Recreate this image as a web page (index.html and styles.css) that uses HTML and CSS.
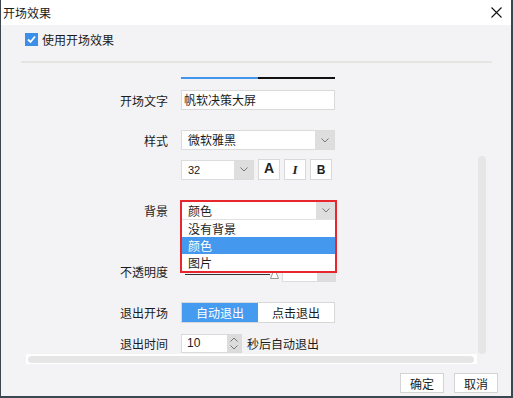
FILE: index.html
```html
<!DOCTYPE html>
<html lang="zh-CN">
<head>
    <meta charset="UTF-8">
    <title>开场效果</title>
    <link rel="stylesheet" href="styles.css">
</head>
<body>
    <div class="window">
        <div class="titlebar">
            <span class="title">开场效果</span>
            <svg class="close" width="11" height="11" viewBox="0 0 11 11"><path d="M0.5 0.5 L10.5 10.5 M10.5 0.5 L0.5 10.5" stroke="#111" stroke-width="1.1" fill="none"/></svg>
        </div>

        <!-- 启用开关 -->
        <div class="enable">
            <span class="checkbox">
                <svg width="11" height="11" viewBox="0 0 11 11"><path d="M2 5.5 L4.5 8 L9 2.5" stroke="#fff" stroke-width="1.8" fill="none"/></svg>
            </span>
            <span>使用开场效果</span>
        </div>
        <div class="divider"></div>

        <div class="pane">
            <div class="content">
                <div class="tabline"><span class="tab-on"></span><span class="tab-off"></span></div>

                <div class="row r1">
                    <label class="lbl">开场文字</label>
                    <div class="input">帆软决策大屏</div>
                </div>

                <div class="row r2">
                    <label class="lbl">样式</label>
                    <div class="select wide">
                        <span class="val">微软雅黑</span>
                        <span class="arrow"><svg width="8" height="5" viewBox="0 0 8 5"><path d="M0.5 0.5 L4 4 L7.5 0.5" stroke="#777" fill="none"/></svg></span>
                    </div>
                </div>

                <div class="row r3">
                    <label class="lbl"></label>
                    <div class="select small">
                        <span class="val num">32</span>
                        <span class="arrow"><svg width="8" height="5" viewBox="0 0 8 5"><path d="M0.5 0.5 L4 4 L7.5 0.5" stroke="#777" fill="none"/></svg></span>
                    </div>
                    <span class="fbtn fa">A</span>
                    <span class="fbtn fi">I</span>
                    <span class="fbtn fb">B</span>
                </div>

                <div class="row r4">
                    <label class="lbl">背景</label>
                    <div class="combo-holder">
                        <div class="combo">
                            <div class="combo-head">
                                <span class="val">颜色</span>
                                <span class="arrow"><svg width="8" height="5" viewBox="0 0 8 5"><path d="M0.5 0.5 L4 4 L7.5 0.5" stroke="#777" fill="none"/></svg></span>
                            </div>
                            <div class="opt">没有背景</div>
                            <div class="opt on">颜色</div>
                            <div class="opt">图片</div>
                        </div>
                    </div>
                </div>

                <div class="row r5">
                    <label class="lbl">不透明度</label>
                    <div class="slider">
                        <span class="track"></span>
                        <svg class="knob" width="9" height="11" viewBox="0 0 9 11"><path d="M4.5 0.5 L8.5 10.5 L0.5 10.5 Z" stroke="#999" fill="#fff"/></svg>
                    </div>
                    <div class="select pct">
                        <span class="val num">100%</span>
                        <span class="arrow"><svg width="8" height="5" viewBox="0 0 8 5"><path d="M0.5 0.5 L4 4 L7.5 0.5" stroke="#777" fill="none"/></svg></span>
                    </div>
                </div>

                <div class="row r6">
                    <label class="lbl">退出开场</label>
                    <div class="toggle">
                        <span class="half active">自动退出</span>
                        <span class="half">点击退出</span>
                    </div>
                </div>

                <div class="row r7">
                    <label class="lbl">退出时间</label>
                    <div class="spin">
                        <span class="val num">10</span>
                        <span class="spin-btns">
                            <svg width="8" height="5" viewBox="0 0 8 5"><path d="M0.5 4.5 L4 1 L7.5 4.5" stroke="#777" fill="none"/></svg>
                            <svg width="8" height="5" viewBox="0 0 8 5"><path d="M0.5 0.5 L4 4 L7.5 0.5" stroke="#777" fill="none"/></svg>
                        </span>
                    </div>
                    <span class="suffix">秒后自动退出</span>
                </div>
            </div>

            <div class="vscroll"><div class="vthumb"></div></div>
            <div class="hscroll"><div class="hthumb"></div></div>
        </div>

        <div class="footer">
            <button type="button">确定</button>
            <button type="button">取消</button>
        </div>
    </div>
</body>
</html>
```

FILE: styles.css
```css
body {
    margin: 0;
    font-family: "Noto Sans CJK SC", "Noto Sans", sans-serif;
    font-size: 12px;
    color: #1c1c1c;
}
.window {
    width: 513px;
    height: 398px;
    box-sizing: border-box;
    border: solid #3b4651;
    border-width: 0 2px 2px 1px;
    background-color: #f3f3f5;
    display: flex;
    flex-direction: column;
}
.titlebar {
    height: 25px;
    background-color: #fff;
    display: flex;
    align-items: center;
    justify-content: space-between;
    padding: 0 9px 0 2px;
}
.title {
    font-size: 12px;
}
.enable {
    height: 28px;
    display: flex;
    align-items: center;
    padding-left: 24px;
}
.checkbox {
    width: 13px;
    height: 13px;
    background-color: #3c8fe9;
    display: flex;
    align-items: center;
    justify-content: center;
    margin-right: 4px;
}
.divider {
    height: 2px;
    width: 471px;
    background-color: #e5e5e1;
    margin: 8px 0 0 20px;
}
.pane {
    display: grid;
    grid-template-columns: 452px 8px;
    grid-template-rows: 291px 10px;
    margin-left: 25px;
}
.content {
    display: flex;
    flex-direction: column;
}
.tabline {
    display: flex;
    width: 154px;
    height: 2px;
    margin: 14px 0 0 155px;
}
.tab-on {
    flex: 1;
    background-color: #4096ec;
}
.tab-off {
    flex: 1;
    background-color: #111;
}
.row {
    display: flex;
    align-items: center;
}
.lbl {
    width: 142px;
    margin-right: 13px;
    text-align: right;
    flex-shrink: 0;
}
.r1 { height: 20px; margin-top: 11px; }
.r2 { height: 20px; margin-top: 20px; }
.r3 { height: 21px; margin-top: 9px; }
.r4 { height: 20px; margin-top: 20px; }
.r5 { height: 21px; margin-top: 41px; }
.r6 { height: 21px; margin-top: 20px; }
.r7 { height: 19px; margin-top: 11px; }

.input {
    width: 154px;
    height: 20px;
    box-sizing: border-box;
    border: 1px solid #dadada;
    background-color: #fff;
    padding-left: 2px;
    line-height: 18px;
}
.select {
    height: 20px;
    box-sizing: border-box;
    border: 1px solid #dcdcdc;
    background-color: #fff;
    display: flex;
}
.select.wide { width: 154px; }
.select.small { width: 73px; }
.select.pct { width: 54px; height: 21px; margin-left: 3px; }
.val {
    flex: 1;
    padding-left: 6px;
    line-height: 18px;
}
.pct .val {
    line-height: 13px;
}
.num {
    font-family: "Liberation Sans", Arial, sans-serif;
    font-size: 11px;
}
.arrow {
    width: 19px;
    background-color: #dedede;
    display: flex;
    align-items: center;
    justify-content: center;
}
.fbtn {
    width: 22px;
    height: 21px;
    box-sizing: border-box;
    border: 1px solid #d8d8d8;
    background-color: #fff;
    margin-left: 4px;
    display: flex;
    align-items: center;
    justify-content: center;
    font-family: "Liberation Sans", Arial, sans-serif;
    font-weight: bold;
    font-size: 12px;
    color: #222;
}
.fa {
    font-size: 14px;
    font-weight: 900;
    padding-bottom: 3px;
}
.fi {
    font-family: "Liberation Serif", serif;
    font-style: italic;
    font-size: 13px;
}

/* 展开的下拉框 */
.combo-holder {
    position: relative;
    width: 154px;
    height: 20px;
}
.combo {
    position: absolute;
    left: -1px;
    top: 0;
    width: 157px;
    box-sizing: border-box;
    border: 2px solid #e8262e;
    background-color: #fff;
    z-index: 2;
}
.combo-head {
    height: 18px;
    box-sizing: border-box;
    border-bottom: 1px solid #e2e2e2;
    display: flex;
}
.combo-head .val {
    line-height: 17px;
}
.opt {
    height: 17px;
    line-height: 17px;
    padding-left: 6px;
}
.opt.on {
    background-color: #4499ee;
    color: #fff;
}

.slider {
    width: 98px;
    height: 21px;
    box-sizing: border-box;
    padding-left: 4px;
    display: flex;
    align-items: flex-end;
}
.track {
    flex: 1;
    height: 1px;
    background-color: #333;
    margin-bottom: 7px;
}
.knob {
    margin-bottom: 3px;
}
.toggle {
    width: 154px;
    height: 21px;
    box-sizing: border-box;
    border: 1px solid #d8d8d8;
    background-color: #fff;
    display: flex;
}
.half {
    flex: 1;
    text-align: center;
    line-height: 19px;
}
.half.active {
    background-color: #459bf0;
    color: #fff;
}
.spin {
    width: 61px;
    height: 19px;
    box-sizing: border-box;
    border: 1px solid #dadada;
    background-color: #fff;
    display: flex;
}
.spin .val {
    padding-left: 5px;
    line-height: 17px;
    font-size: 12px;
}
.spin-btns {
    width: 14px;
    background-color: #dcdcdc;
    display: flex;
    flex-direction: column;
    align-items: center;
    justify-content: space-around;
}
.suffix {
    margin-left: 5px;
}
.vscroll {
    display: flex;
    flex-direction: column;
    padding-top: 93px;
}
.vthumb {
    flex: 1;
    background-color: #e6e6e6;
    border-radius: 4px;
}
.hscroll {
    width: 451px;
    box-sizing: border-box;
    background-color: #fff;
    padding: 2px 3px 1px 2px;
    display: flex;
}
.hthumb {
    flex: 1;
    background-color: #e6e6e6;
    border-radius: 4px;
}
.footer {
    display: flex;
    justify-content: flex-end;
    gap: 10px;
    padding: 9px 13px 0 0;
}
button {
    width: 44px;
    height: 20px;
    padding: 0;
    border: 1px solid #d4d4d4;
    background-color: #fff;
    font: inherit;
    color: #1c1c1c;
}
```
